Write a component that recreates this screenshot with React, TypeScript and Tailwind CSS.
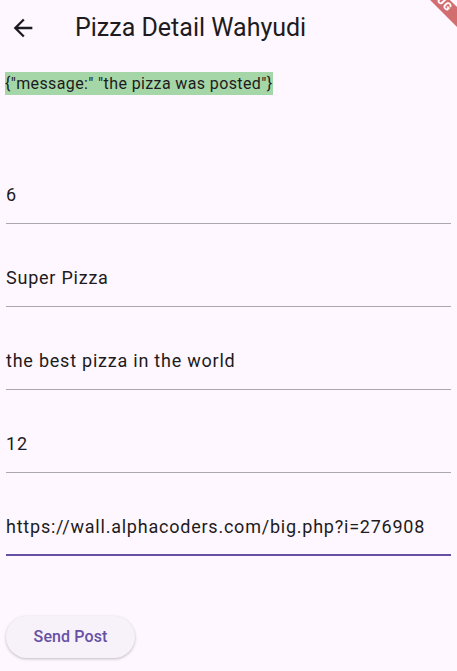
const fields = [
  { value: '6' },
  { value: 'Super Pizza' },
  { value: 'the best pizza in the world' },
  { value: '12' },
  { value: 'https://wall.alphacoders.com/big.php?i=276908', focused: true },
]

function BackArrow() {
  return (
    <svg viewBox="0 0 24 24" className="h-7 w-7" fill="#1d1b20">
      <path d="M20 11H7.83l5.59-5.59L12 4l-8 8 8 8 1.41-1.41L7.83 13H20v-2z" />
    </svg>
  )
}

export default function App() {
  return (
    <div className="relative w-[457px] h-[671px] overflow-hidden bg-[#fef7ff] text-[#1d1b20] font-['Roboto',sans-serif]">
      {/* app bar */}
      <div className="flex h-14 items-center pl-[9px]">
        <BackArrow />
        <h1 className="ml-[38px] text-[25px] leading-8">Pizza Detail Wahyudi</h1>
      </div>

      <div className="px-[6px]">
        <div className="mt-4 -ml-px inline-block bg-[#a5d6a7] h-[23px] text-[16px] leading-[23px] tracking-[0.38px]">
          {'{"message:" "the pizza was posted"}'}
        </div>

        <div className="mt-[45px] flex flex-col">
          {fields.map((f) => (
            <div
              key={f.value}
              className={
                f.focused
                  ? 'pt-[42px] pb-[15px] border-b-2 border-[#6750a4]'
                  : 'pt-[42px] pb-4 border-b border-[#aca8b0]'
              }
            >
              <div className="h-6 text-[18px] leading-6 tracking-[0.77px]">{f.value}</div>
            </div>
          ))}
        </div>

        <button className="mt-[60px] flex h-[42px] w-[129px] items-center justify-center rounded-full bg-[#f7f2fa] text-[16px] font-medium tracking-[0.1px] text-[#6750a4] shadow-[0_1px_3px_rgba(0,0,0,0.25)]">
          Send Post
        </button>
      </div>

      {/* debug ribbon */}
      <div className="absolute left-[396px] top-[-11px] flex h-[14px] w-20 rotate-45 items-center justify-center bg-[rgba(183,28,28,0.63)] text-[11px] font-black leading-3 tracking-[1px] text-white">
        DEBUG
      </div>
    </div>
  )
}
